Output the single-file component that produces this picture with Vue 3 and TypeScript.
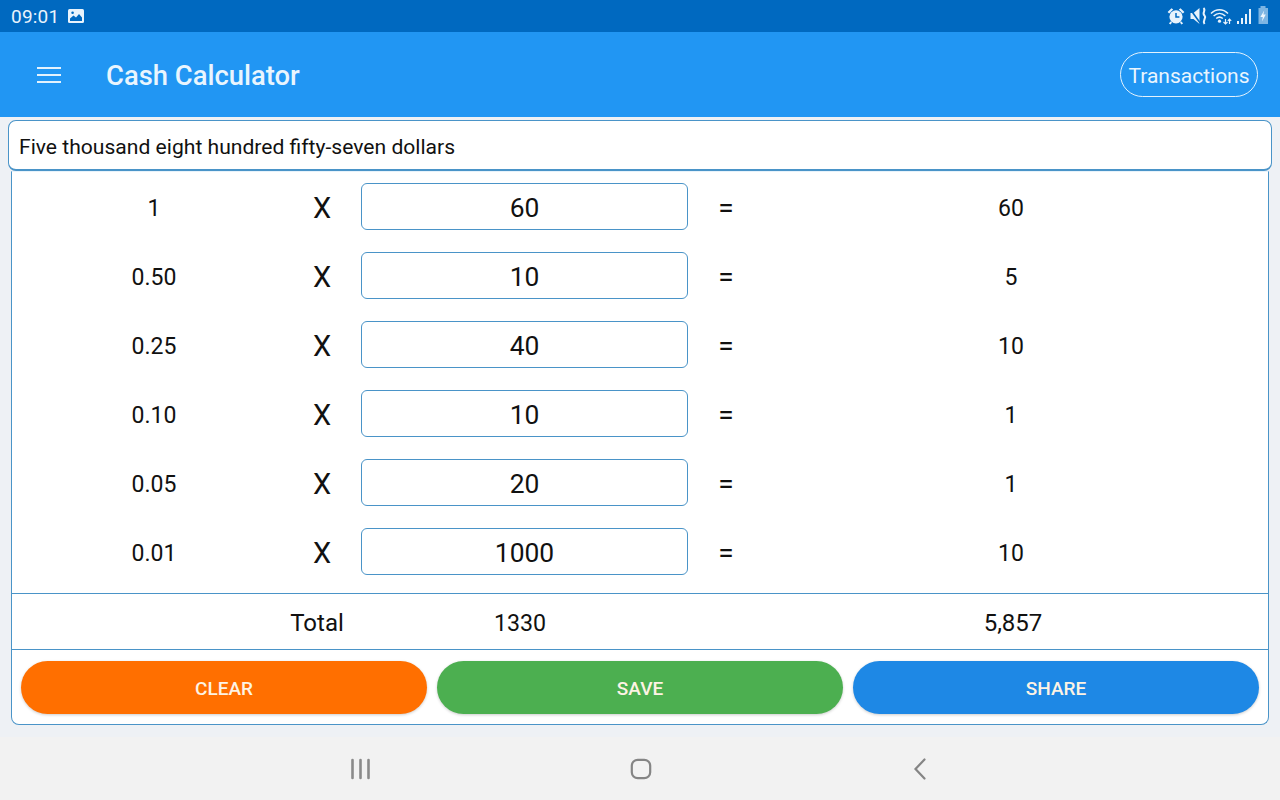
<template>
  <div class="screen">
    <div class="status-bar">
      <span class="status-bar__time">09:01</span>
      <svg class="status-bar__photo" width="16" height="14" viewBox="0 0 16 14">
        <rect width="16" height="14" rx="1.5" fill="#e8f3fc" />
        <path d="M2 12 L2 9.5 L5.5 6.5 L8 8.5 L11 5 L14 8.5 L14 12 Z" fill="#0069c0" />
        <circle cx="4.6" cy="3.8" r="1.3" fill="#0069c0" />
      </svg>
      <div class="status-bar__icons">
        <svg class="status-bar__alarm" width="18" height="18" viewBox="0 0 18 18">
          <circle cx="9" cy="9.8" r="6.6" fill="#e8f3fc" />
          <path d="M9 6 V10 H12.4" fill="none" stroke="#0069c0" stroke-width="1.5" />
          <path d="M0.6 5 L4.5 1.2 L6.2 2.4 L2.2 6.6 Z M17.4 5 L13.5 1.2 L11.8 2.4 L15.8 6.6 Z" fill="#e8f3fc" />
          <path d="M4.2 15 L2.8 17 M13.8 15 L15.2 17" stroke="#e8f3fc" stroke-width="2" />
        </svg>
        <svg class="status-bar__mute" width="17" height="18" viewBox="0 0 17 18">
          <path d="M0.5 6 H3.5 L9.5 1 V17 L3.5 12 H0.5 Z" fill="#e8f3fc" />
          <path d="M0.5 2.5 L10.5 16.5" stroke="#0069c0" stroke-width="1.6" />
          <path d="M13.5 1 C16.5 3.5 11.5 5.5 14.5 8.5 C17 11 12 13 14.5 17" fill="none" stroke="#e8f3fc" stroke-width="2" />
        </svg>
        <svg width="22" height="18" viewBox="0 0 22 18">
          <path d="M1 6.5 C6 1.6 13 1.6 18 6.5 M3.6 9 C7.2 5.6 11.8 5.6 15.4 9 M6.2 11.5 C8.2 9.8 10.8 9.8 12.8 11.5" fill="none" stroke="#e8f3fc" stroke-width="1.5" />
          <circle cx="9.5" cy="14.2" r="1.6" fill="#e8f3fc" />
          <path d="M15.5 12 V17 M13.5 15 L15.5 17 L17.5 15 M19.5 17 V12 M17.8 13.8 L19.5 12 L21.2 13.8" fill="none" stroke="#e8f3fc" stroke-width="1.2" />
        </svg>
        <svg class="status-bar__signal" width="15" height="18" viewBox="0 0 15 18">
          <path d="M1 14 H3 V17 H1 Z M5 11 H7 V17 H5 Z M9 7 H11 V17 H9 Z M13 2 H15 V17 H13 Z" fill="#e8f3fc" />
        </svg>
        <svg class="status-bar__battery" width="12" height="19" viewBox="0 0 12 19">
          <path d="M3.5 0 H8.5 V2 H11 V18 H1.5 V2 H3.5 Z" fill="#7db5e3" />
          <path d="M7.2 4.5 L3.4 11 H5.8 L5 15.5 L8.8 8.5 H6.4 Z" fill="#eef6fd" />
        </svg>
      </div>
    </div>

    <header class="app-bar">
      <div class="app-bar__menu"><span></span><span></span><span></span></div>
      <h1 class="app-bar__title">Cash Calculator</h1>
      <button class="app-bar__action">Transactions</button>
    </header>

    <main class="content">
      <div class="words">Five thousand eight hundred fifty-seven dollars</div>
      <section class="card">
        <div class="rows">
          <div v-for="row in rows" :key="row.value" class="row">
            <span class="row__value">{{ row.value }}</span>
            <span class="row__times">X</span>
            <input class="row__input" :value="row.count" />
            <span class="row__equals">=</span>
            <span class="row__result">{{ row.result }}</span>
          </div>
        </div>
        <div class="totals">
          <span></span>
          <span>Total</span>
          <span class="totals__count">{{ totalCount }}</span>
          <span></span>
          <span>{{ totalSum }}</span>
        </div>
        <div class="actions">
          <button class="actions__btn actions__btn--clear">CLEAR</button>
          <button class="actions__btn actions__btn--save">SAVE</button>
          <button class="actions__btn actions__btn--share">SHARE</button>
        </div>
      </section>
    </main>

    <nav class="nav-bar">
      <svg width="22" height="22" viewBox="0 0 22 22">
        <path d="M2.5 2 V20 M10.5 2 V20 M18.5 2 V20" stroke="#8a8a8a" stroke-width="2.6" stroke-linecap="round" />
      </svg>
      <svg width="22" height="22" viewBox="0 0 22 22">
        <rect x="1.8" y="1.8" width="18.4" height="18.4" rx="6" fill="none" stroke="#858585" stroke-width="2.2" />
      </svg>
      <svg class="nav-bar__back" width="22" height="22" viewBox="0 0 22 22">
        <path d="M15.5 1.5 L6.5 11 L15.5 20.5" fill="none" stroke="#858585" stroke-width="2.2" stroke-linecap="round" />
      </svg>
    </nav>
  </div>
</template>

<script setup lang="ts">
interface Row {
  value: string
  count: number
  result: number
}

const rows: Row[] = [
  { value: '1', count: 60, result: 60 },
  { value: '0.50', count: 10, result: 5 },
  { value: '0.25', count: 40, result: 10 },
  { value: '0.10', count: 10, result: 1 },
  { value: '0.05', count: 20, result: 1 },
  { value: '0.01', count: 1000, result: 10 },
]

const totalCount = '1330'
const totalSum = '5,857'
</script>

<style>
html,
body {
  margin: 0;
  background: #eef1f5;
}
</style>

<style scoped>
.screen {
  display: flex;
  flex-direction: column;
  width: 1280px;
  height: 800px;
  overflow: hidden;
  font-family: Roboto, "Liberation Sans", sans-serif;
  color: #111;
}

.status-bar {
  display: flex;
  align-items: center;
  height: 32px;
  padding: 0 11px;
  box-sizing: border-box;
  background: #0069c0;
  color: #e8f3fc;
}

.status-bar__time {
  font-size: 19px;
  letter-spacing: 0.2px;
}

.status-bar__photo {
  margin-left: 9px;
}

.status-bar__icons {
  display: flex;
  align-items: center;
  gap: 4px;
  margin-left: auto;
}

.status-bar__alarm {
  margin-right: 1px;
}

.status-bar__mute {
  margin-right: -1px;
}

.status-bar__signal {
  margin-right: 2px;
}

.status-bar__battery {
  margin-top: -2px;
}

.app-bar {
  display: flex;
  align-items: center;
  height: 85px;
  padding: 0 22px 0 37px;
  box-sizing: border-box;
  background: #2196f3;
  color: #fff;
}

.app-bar__menu {
  display: flex;
  flex-direction: column;
  gap: 5px;
  width: 24px;
}

.app-bar__menu span {
  display: block;
  height: 2px;
  background: #e3f2fd;
}

.app-bar__title {
  margin: 0 0 0 45px;
  padding-top: 2px;
  font-size: 27.4px;
  font-weight: 500;
  color: #e9f5fe;
}

.app-bar__action {
  width: 138px;
  height: 45px;
  margin-left: auto;
  padding: 2px 0 0;
  border: 1px solid #e3f2fd;
  border-radius: 23px;
  background: transparent;
  color: #e9f5fe;
  font: inherit;
  font-size: 21px;
}

.content {
  flex: 1;
  display: flex;
  flex-direction: column;
  background: #eef1f5;
  padding-top: 3px;
}

.words {
  height: 51px;
  margin: 0 8px;
  padding: 2px 10px 0;
  box-sizing: border-box;
  display: flex;
  align-items: center;
  border: 1px solid #4a94c8;
  border-bottom-width: 2px;
  border-radius: 8px;
  background: #fff;
  font-size: 21.1px;
}

.card {
  margin: 0 11px;
  height: 554px;
  box-sizing: border-box;
  border: 1px solid #4a94c8;
  border-top: 1px solid #e8f3fb;
  border-radius: 0 0 8px 8px;
  background: #fff;
}

.rows {
  padding-bottom: 7px;
}

.row {
  display: grid;
  grid-template-columns: 282px 56px 338px 76px 494px;
  align-items: center;
  height: 69px;
  text-align: center;
  font-size: 23px;
}

.row__value {
  padding: 4px 0 0 2px;
}

.row__result {
  padding-top: 4px;
}

.row__times {
  padding-top: 2px;
  font-size: 29px;
}

.row__equals {
  padding-top: 2px;
  font-size: 28px;
}

.row__input {
  justify-self: end;
  width: 327px;
  height: 47px;
  padding: 2px 0 0;
  box-sizing: border-box;
  border: 1px solid #4a94c8;
  border-radius: 6px;
  background: #fff;
  color: #111;
  font: inherit;
  font-size: 26.4px;
  text-align: center;
}

.totals {
  display: grid;
  grid-template-columns: 250px 110px 296px 96px 498px;
  align-items: center;
  height: 57px;
  padding-top: 3px;
  box-sizing: border-box;
  border-top: 1px solid #4a94c8;
  border-bottom: 1px solid #4a94c8;
  text-align: center;
  font-size: 24px;
}

.totals__count {
  font-size: 23.2px;
}

.actions {
  display: flex;
  gap: 10px;
  padding: 11px 9px 9px;
}

.actions__btn {
  flex: 1;
  height: 53px;
  padding: 2px 0 0;
  border: 0;
  border-radius: 27px;
  color: #fdf3e4;
  font: inherit;
  font-size: 19px;
  font-weight: 500;
  box-shadow: 0 1px 3px rgba(0, 0, 0, 0.2);
}

.actions__btn--clear {
  background: #ff6f00;
}

.actions__btn--save {
  background: #4caf50;
}

.actions__btn--share {
  background: #1e88e5;
}

.nav-bar {
  display: flex;
  align-items: center;
  height: 63px;
  flex-shrink: 0;
  padding-left: 1px;
  box-sizing: border-box;
  background: #f2f2f2;
  justify-content: center;
  gap: 258px;
}

.nav-bar__back {
  margin-left: -1px;
}
</style>
